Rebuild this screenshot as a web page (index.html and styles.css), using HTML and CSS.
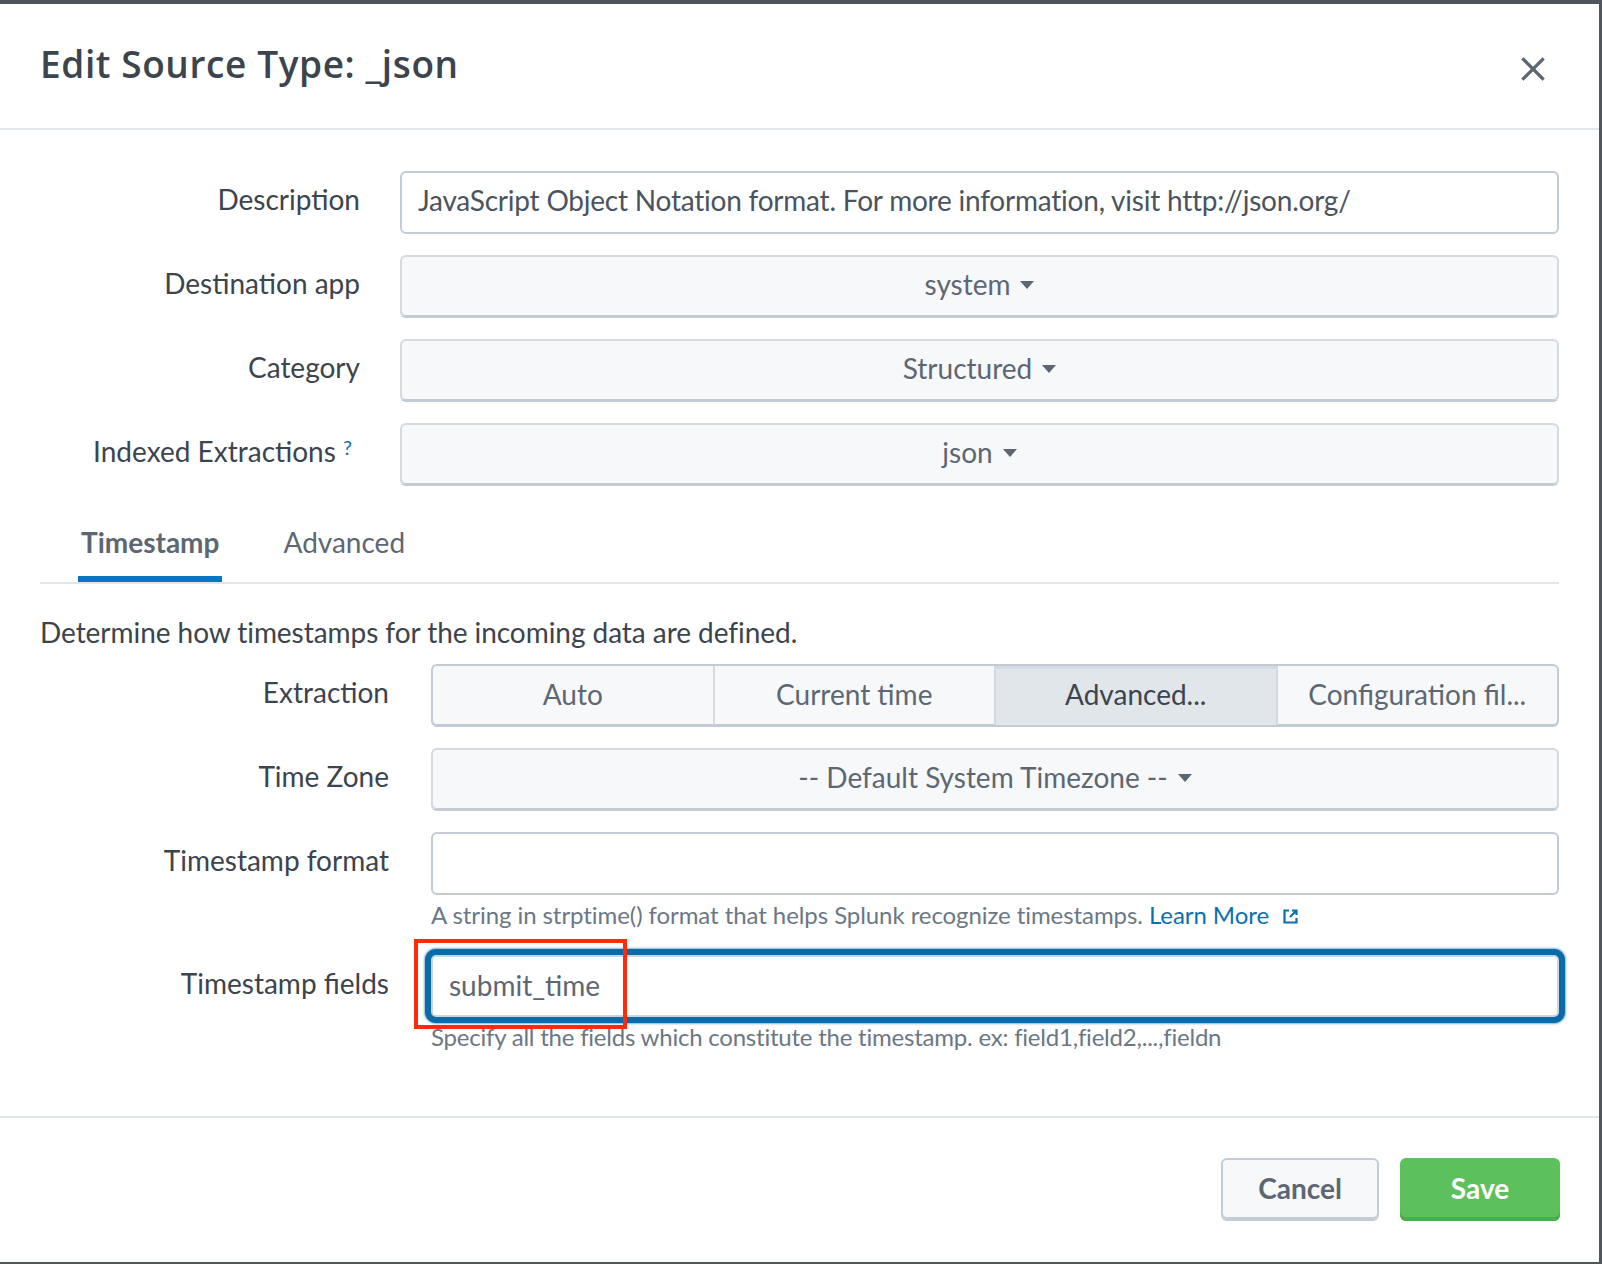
FILE: index.html
```html
<!DOCTYPE html>
<html lang="en">
<head>
<meta charset="utf-8">
<title>Edit Source Type: _json</title>
<link rel="stylesheet" href="styles.css">
</head>
<body>
<div class="modal">
  <header class="modal-header">
    <h1 class="modal-title">Edit Source Type: _json</h1>
    <button class="close-btn" aria-label="Close">
      <svg width="24" height="24" viewBox="0 0 24 24"><path d="M2.5 2.5L21.5 21.5M21.5 2.5L2.5 21.5" stroke="#5c6773" stroke-width="3.2" stroke-linecap="square" fill="none"/></svg>
    </button>
  </header>

  <div class="modal-body">
    <div class="form-row">
      <div class="label">Description</div>
      <div class="control"><div class="text-input">JavaScript Object Notation format. For more information, visit http://json.org/</div></div>
    </div>
    <div class="form-row">
      <div class="label">Destination app</div>
      <div class="control"><div class="dropdown">system<span class="caret"></span></div></div>
    </div>
    <div class="form-row">
      <div class="label">Category</div>
      <div class="control"><div class="dropdown">Structured<span class="caret"></span></div></div>
    </div>
    <div class="form-row">
      <div class="label">Indexed Extractions <sup class="help-q">?</sup></div>
      <div class="control"><div class="dropdown">json<span class="caret"></span></div></div>
    </div>

    <div class="tabs">
      <div class="tab active">Timestamp</div>
      <div class="tab">Advanced</div>
    </div>

    <p class="intro">Determine how timestamps for the incoming data are defined.</p>

    <div class="form-row wide">
      <div class="label">Extraction</div>
      <div class="control">
        <div class="segmented">
          <div class="seg">Auto</div>
          <div class="seg">Current time</div>
          <div class="seg selected">Advanced...</div>
          <div class="seg">Configuration fil...</div>
        </div>
      </div>
    </div>
    <div class="form-row wide">
      <div class="label">Time Zone</div>
      <div class="control"><div class="dropdown">-- Default System Timezone --<span class="caret"></span></div></div>
    </div>
    <div class="form-row wide">
      <div class="label">Timestamp format</div>
      <div class="control">
        <div class="text-input empty"></div>
        <div class="help">A string in strptime() format that helps Splunk recognize timestamps. <a class="link">Learn More <svg class="ext" width="17" height="17" viewBox="0 0 17 17"><path d="M7 2.5H2.5v12h12V10" fill="none" stroke="#0a6fae" stroke-width="2.2"/><path d="M10 2.5h4.5V7M14.5 2.5L8 9" fill="none" stroke="#0a6fae" stroke-width="2.2"/></svg></a></div>
      </div>
    </div>
    <div class="form-row wide fields-row">
      <div class="label">Timestamp fields</div>
      <div class="control">
        <div class="annot-wrap">
          <div class="text-input focused">submit_time</div>
          <div class="annotation"></div>
        </div>
        <div class="help help-tight">Specify all the fields which constitute the timestamp. ex: field1,field2,...,fieldn</div>
      </div>
    </div>
  </div>

  <footer class="modal-footer">
    <button class="btn btn-cancel">Cancel</button>
    <button class="btn btn-save">Save</button>
  </footer>
</div>
</body>
</html>
```

FILE: styles.css
```css
* { box-sizing: border-box; }

html, body {
  margin: 0;
  padding: 0;
}

body {
  width: 1602px;
  height: 1264px;
  background: #4f565d;
  font-family: "Lato", "Liberation Sans", sans-serif;
  color: #3c444d;
  overflow: hidden;
}

.modal {
  width: 1599px;
  height: 1258px;
  margin-top: 4px;
  background: #ffffff;
  display: flex;
  flex-direction: column;
}

/* Header */
.modal-header {
  height: 126px;
  border-bottom: 2px solid #e1e6eb;
  display: flex;
  align-items: center;
  justify-content: space-between;
  padding: 0 54px 6px 40px;
}

.modal-title {
  margin: 0;
  font-family: "Open Sans", "Lato", sans-serif;
  font-size: 37px;
  font-weight: 600;
  color: #3c444d;
  letter-spacing: 0.6px;
}

.close-btn {
  background: none;
  border: 0;
  padding: 0;
  width: 24px;
  height: 24px;
  margin-top: 12px;
  display: flex;
}

/* Body */
.modal-body {
  flex: 1;
  padding: 41px 40px 0 40px;
}

.form-row {
  display: flex;
  gap: 40px;
  margin-bottom: 21px;
}

.form-row .label {
  width: 320px;
  flex: none;
  text-align: right;
  font-size: 28px;
  line-height: 34px;
  padding-top: 11px;
  color: #3c444d;
  white-space: nowrap;
}

.form-row.wide {
  gap: 42px;
}

.form-row.wide .label {
  width: 349px;
}

.control {
  flex: 1;
  min-width: 0;
}

.help-q {
  color: #0a6fae;
  font-size: 20px;
  vertical-align: top;
  position: relative;
  top: -4px;
  margin-left: 0;
  margin-right: 8px;
}

.text-input {
  height: 63px;
  border: 2px solid #c3cbd4;
  border-radius: 6px;
  background: #fff;
  font-size: 28px;
  line-height: 34px;
  color: #4b545e;
  padding: 10px 16px 0 16px;
  white-space: nowrap;
  overflow: hidden;
  letter-spacing: -0.22px;
}

.dropdown {
  height: 63px;
  border: 2px solid #d4dae0;
  border-bottom-color: #c3cbd4;
  border-radius: 6px;
  background: #f7f8fa;
  box-shadow: inset 0 -1px 0 #c3cbd4;
  font-size: 28px;
  color: #5c6773;
  display: flex;
  align-items: center;
  justify-content: center;
  padding-bottom: 5px;
}

.caret {
  display: inline-block;
  width: 0;
  height: 0;
  border-left: 7px solid transparent;
  border-right: 7px solid transparent;
  border-top: 8px solid #5c6773;
  margin-left: 10px;
  margin-top: 2px;
}

/* Tabs */
.tabs {
  display: flex;
  gap: 58px;
  margin-top: -7px;
  padding-left: 38px;
  border-bottom: 2px solid #e1e6eb;
}

.tab {
  height: 82px;
  padding: 1px 3px 0 3px;
  font-size: 28px;
  color: #5c6773;
  display: flex;
  align-items: center;
}

.tab.active {
  font-weight: 700;
  box-shadow: inset 0 -6px 0 #0a77bd;
}

.intro {
  margin: 31px 0 15px 0;
  font-size: 28px;
  line-height: 34px;
  color: #3c444d;
  letter-spacing: -0.05px;
}

/* Segmented control */
.segmented {
  height: 63px;
  display: flex;
  border: 2px solid #c3cbd4;
  border-radius: 6px;
  overflow: hidden;
  background: #f7f8fa;
  box-shadow: inset 0 -1px 0 #c3cbd4;
}

.seg {
  flex: 1;
  display: flex;
  align-items: center;
  justify-content: center;
  font-size: 28px;
  color: #5c6773;
  border-left: 2px solid #d4dae0;
  padding-bottom: 4px;
}

.seg:first-child {
  border-left: 0;
}

.seg.selected {
  background: #e1e6eb;
  color: #3c444d;
  box-shadow: inset 0 3px 0 #d4dae0;
}

.text-input.empty {
  padding: 0;
}

.help {
  margin-top: 5px;
  font-size: 24px;
  line-height: 30px;
  color: #6b7785;
  white-space: nowrap;
  letter-spacing: -0.07px;
}

.help-tight {
  letter-spacing: -0.22px;
}

.link {
  color: #0a6fae;
}

.ext {
  vertical-align: -1px;
  margin-left: 7px;
}

.fields-row {
  margin-top: 25px;
}

.annot-wrap {
  position: relative;
}

.text-input.focused {
  height: 62px;
  border-color: #c9d6e0;
  border-radius: 5px;
  box-shadow: 0 0 0 6px #0b6aa8, 0 0 2px 7px rgba(11, 106, 168, 0.5);
  padding-left: 16px;
  padding-top: 11px;
  color: #5c6773;
  letter-spacing: 0;
}

.annotation {
  position: absolute;
  left: -17px;
  top: -16px;
  width: 213px;
  height: 90px;
  border: 4.5px solid #ff2a0a;
  pointer-events: none;
}

/* Footer */
.modal-footer {
  height: 146px;
  border-top: 2px solid #e1e6eb;
  display: flex;
  justify-content: flex-end;
  align-items: flex-start;
  gap: 21px;
  padding: 40px 39px 0 0;
}

.btn {
  height: 63px;
  border-radius: 6px;
  font-family: "Lato", "Liberation Sans", sans-serif;
  font-size: 28px;
  font-weight: 700;
  cursor: pointer;
  padding: 0 0 4px 0;
}

.btn-cancel {
  width: 158px;
  background: #f7f8fa;
  border: 2px solid #c3cbd4;
  box-shadow: inset 0 -2px 0 #c3cbd4;
  color: #5c6773;
}

.btn-save {
  width: 160px;
  background: #5cc05c;
  border: 0;
  box-shadow: inset 0 -4px 0 #4fab4f;
  color: #ffffff;
}
```
